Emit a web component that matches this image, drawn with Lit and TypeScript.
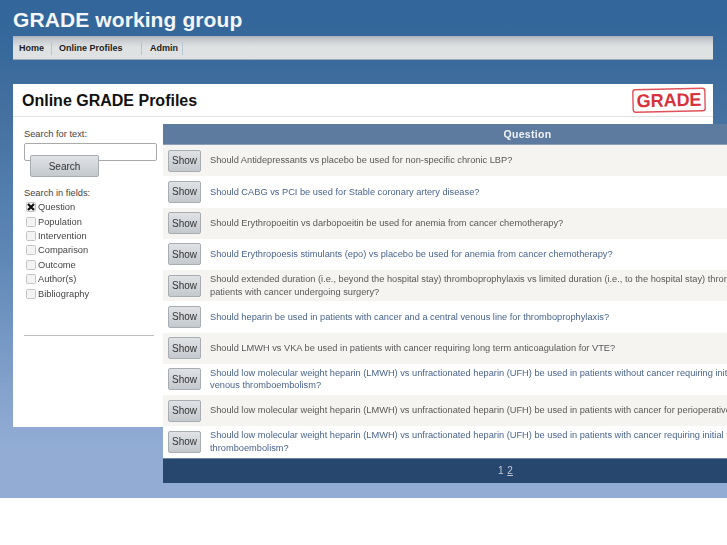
import { LitElement, html, css, svg } from "lit";
import { customElement } from "lit/decorators.js";

const rows: [string, string?][] = [
  ["Should Antidepressants vs placebo be used for non-specific chronic LBP?"],
  ["Should CABG vs PCI be used for Stable coronary artery disease?"],
  ["Should Erythropoeitin vs darbopoeitin be used for anemia from cancer chemotherapy?"],
  ["Should Erythropoesis stimulants (epo) vs placebo be used for anemia from cancer chemotherapy?"],
  ["Should extended duration (i.e., beyond the hospital stay) thromboprophylaxis vs limited duration (i.e., to the hospital stay) thromboprophylaxis be used in", "patients with cancer undergoing surgery?"],
  ["Should heparin be used in patients with cancer and a central venous line for thromboprophylaxis?"],
  ["Should LMWH vs VKA be used in patients with cancer requiring long term anticoagulation for VTE?"],
  ["Should low molecular weight heparin (LMWH) vs unfractionated heparin (UFH) be used in patients without cancer requiring initial treatment of", "venous thromboembolism?"],
  ["Should low molecular weight heparin (LMWH) vs unfractionated heparin (UFH) be used in patients with cancer for perioperative thromboprophylaxis?"],
  ["Should low molecular weight heparin (LMWH) vs unfractionated heparin (UFH) be used in patients with cancer requiring initial treatment of", "thromboembolism?"],
];
const fields = ["Question", "Population", "Intervention", "Comparison", "Outcome", "Author(s)", "Bibliography"];

@customElement("app-root")
export class AppRoot extends LitElement {
  static styles = css`
    :host {
      display: block;
      width: 727px;
      height: 545px;
      overflow: hidden;
      background: #fff;
      font-family: "Liberation Sans", Arial, sans-serif;
    }
    .page {
      height: 498px;
      box-sizing: border-box;
      padding: 0 14px 0 13px;
      background: linear-gradient(#33669a 0, #33669a 20px, #43709f 110px, #5d86b5 250px, #89a6cf 410px, #92acd4 445px, #92acd4 100%);
      filter: blur(0.35px);
    }
    h1.site {
      margin: 0;
      height: 36px;
      line-height: 40px;
      font-size: 21px;
      font-weight: bold;
      color: #f4f6f9;
      letter-spacing: 0.1px;
    }
    nav {
      display: flex;
      height: 24px;
      box-sizing: border-box;
      background: linear-gradient(#b9bec5 0, #d3d6d9 6px, #dfe2e3 10px, #dfe2e3 100%);
      border-bottom: 1px solid #9fa9b5;
      border-top: 1px solid #a9b0bb;
      font-size: 9px;
      font-weight: bold;
      color: #1c1c1c;
    }
    nav a {
      display: flex;
      align-items: center;
      height: 13px;
      margin-top: 5px;
      padding-bottom: 1px;
      border-right: 1px solid #b4c6d4;
      box-sizing: border-box;
    }
    nav a:nth-child(1) { width: 39px; padding-left: 6px; }
    nav a:nth-child(2) { width: 90px; padding-left: 7px; }
    nav a:nth-child(3) { width: 41px; padding-left: 8px; }
    .panel {
      margin-top: 24px;
      height: 343px;
      background: #fff;
    }
    .head {
      display: flex;
      align-items: center;
      justify-content: space-between;
      height: 33px;
      box-sizing: border-box;
      padding: 1px 6px 0 9px;
      border-bottom: 1px solid #e2e2e2;
    }
    .head h2 {
      margin: 0;
      font-size: 16px;
      font-weight: bold;
      color: #111;
    }
    .logo { display: block; }
    .body { display: flex; }
    .side {
      width: 150px;
      flex: none;
      box-sizing: border-box;
      padding: 11px 0 0 11px;
      font-size: 9.3px;
      color: #444;
    }
    .lbl { height: 15px; line-height: 12px; }
    .input {
      width: 133px;
      height: 18px;
      box-sizing: border-box;
      border: 1px solid #a9a9a9;
      border-radius: 2px;
      background: #fff;
    }
    .btn {
      display: flex;
      align-items: center;
      justify-content: center;
      box-sizing: border-box;
      border: 1px solid #a8adb2;
      border-radius: 2px;
      background: linear-gradient(#e0e2e5, #c4c9ce);
      color: #333;
      font-size: 10px;
      font-family: inherit;
      padding: 0;
    }
    .search { width: 69px; height: 22px; margin: -6px 0 0 6px; position: relative; }
    .fields { margin-top: 10px; }
    .fields .lbl { height: 13px; }
    .check { display: flex; align-items: center; height: 14.4px; padding-left: 2px; gap: 2px; }
    .box {
      width: 10px;
      height: 10px;
      flex: none;
      box-sizing: border-box;
      border: 1px solid #c4c4c4;
      border-radius: 1.5px;
      background: #f4f4f4;
      display: flex;
    }
    .rule { margin-top: 34px; width: 130px; border-top: 1px solid #bdbdbd; }
    .tbl {
      width: 730px;
      flex: none;
      margin-top: 7px;
      background: #fff;
      font-size: 9.25px;
    }
    .th {
      height: 21px;
      box-sizing: border-box;
      background: #5d7a9f;
      border-bottom: 1px solid #8ba0b8;
      color: #f1f3f6;
      font-weight: bold;
      font-size: 10.5px;
      line-height: 20px;
      text-align: center;
      width: 729px;
      letter-spacing: 0.3px;
    }
    .tr {
      display: flex;
      align-items: center;
      height: 31.25px;
      padding-left: 5px;
      gap: 9px;
      color: #4a648f;
      line-height: 12.7px;
      white-space: nowrap;
    }
    .tr:nth-child(odd) { background: #f5f4f1; color: #585858; }
    .show { width: 33px; height: 22px; flex: none; }
    .foot {
      height: 25.5px;
      box-sizing: border-box;
      background: #28476f;
      border-top: 1px solid #6d83a3;
      color: #c3cad6;
      font-size: 10px;
      line-height: 23px;
      padding-left: 335px;
    }
    .foot u { margin-left: 1px; }
  `;

  render() {
    return html`<div class="page">
      <h1 class="site">GRADE working group</h1>
      <nav><a>Home</a><a>Online Profiles</a><a>Admin</a></nav>
      <div class="panel">
        <div class="head">
          <h2>Online GRADE Profiles</h2>
          <svg class="logo" width="76" height="27" viewBox="0 0 76 27">
            <g transform="rotate(-1.2 38 13)">
              <rect x="2" y="2" width="72" height="22.5" rx="2.5" fill="none" stroke="#e0525a" stroke-width="1.4"/>
              <text x="38" y="19.5" text-anchor="middle" font-family="Liberation Sans" font-weight="bold" font-size="18.5" fill="#d7323c" textLength="65" lengthAdjust="spacingAndGlyphs">GRADE</text>
            </g>
          </svg>
        </div>
        <div class="body">
          <div class="side">
            <div class="lbl">Search for text:</div>
            <div class="input"></div>
            <button class="btn search">Search</button>
            <div class="fields">
              <div class="lbl">Search in fields:</div>
              ${fields.map((f, i) => html`<div class="check">
                <span class="box">${i === 0 ? svg`<svg width="8" height="8" viewBox="0 0 8 8"><path d="M1 1L7 7M7 1L1 7" stroke="#111" stroke-width="2.2"/></svg>` : ""}</span>${f}
              </div>`)}
            </div>
            <div class="rule"></div>
          </div>
          <div class="tbl">
            <div class="th">Question</div>
            <div>
              ${rows.map(r => html`<div class="tr"><button class="btn show">Show</button><div>${r[0]}${r[1] ? html`<br>${r[1]}` : ""}</div></div>`)}
            </div>
            <div class="foot">1 <u>2</u></div>
          </div>
        </div>
      </div>
    </div>`;
  }
}
